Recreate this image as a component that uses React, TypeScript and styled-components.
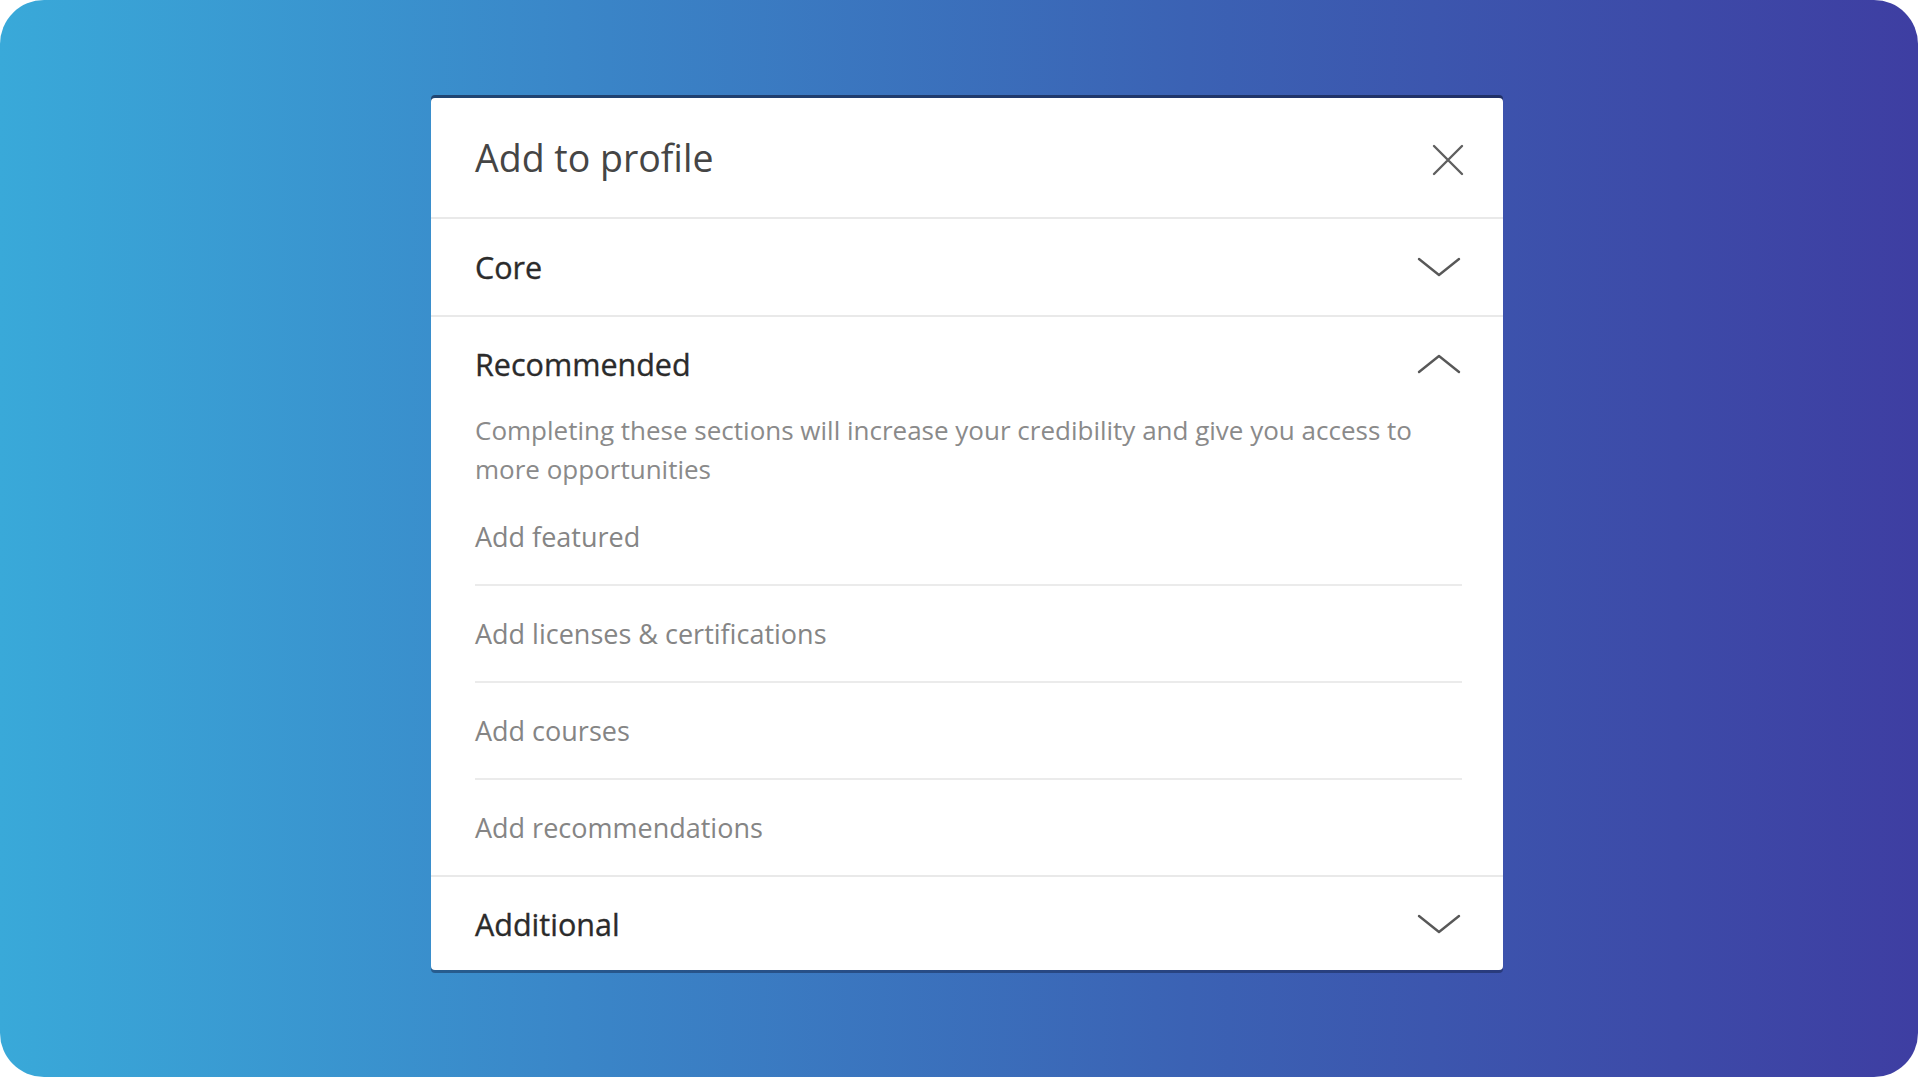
import React from "react";
import styled, { createGlobalStyle } from "styled-components";

const GlobalStyle = createGlobalStyle`
  html, body {
    margin: 0;
    padding: 0;
    background: #ffffff;
    font-family: "Open Sans", "Noto Sans", sans-serif;
  }
`;

const Backdrop = styled.div`
  box-sizing: border-box;
  width: 1918px;
  height: 1077px;
  border-radius: 44px;
  background: linear-gradient(90deg, #39a9d9 0%, #3a86c8 30%, #3b62b4 62%, #3e3ea2 100%);
  display: flex;
  align-items: flex-start;
  padding: 98px 0 0 431px;
`;

const Modal = styled.div`
  width: 1072px;
  background: #ffffff;
  border-radius: 4px;
  box-shadow: 0 -3px 0 rgba(18, 30, 66, 0.65), 0 3px 0 rgba(18, 30, 66, 0.45);
  display: flex;
  flex-direction: column;
`;

const Header = styled.header`
  height: 119px;
  display: flex;
  align-items: center;
  justify-content: space-between;
  padding: 0 39px 0 44px;
  border-bottom: 2px solid #e9e9e9;
`;

const Title = styled.h2`
  margin: 0;
  font-size: 37.5px;
  font-weight: 400;
  color: #454545;
`;

const IconButton = styled.button<{ $offset?: number }>`
  display: flex;
  align-items: center;
  justify-content: center;
  padding: 0;
  margin: ${(p) => p.$offset ?? 0}px 0 0 0;
  border: none;
  background: transparent;
  cursor: pointer;
`;

const Section = styled.section<{ $last?: boolean }>`
  border-bottom: ${(p) => (p.$last ? "none" : "2px solid #e9e9e9")};
`;

const SectionHeader = styled.div<{ $height: number }>`
  height: ${(p) => p.$height}px;
  display: flex;
  align-items: center;
  justify-content: space-between;
  padding: 0 42px 0 44px;
`;

const SectionTitle = styled.h3`
  margin: 0;
  font-size: 30.5px;
  font-weight: 400;
  color: #2b2b2b;
  -webkit-text-stroke: 0.35px #2b2b2b;
`;

const Description = styled.p`
  margin: 0;
  padding: 0 41px 0 44px;
  font-size: 26px;
  line-height: 39px;
  color: #8a8a8a;
`;

const ItemList = styled.ul`
  list-style: none;
  margin: 0 41px 0 44px;
  padding: 0;
`;

const Item = styled.li`
  height: 95px;
  display: flex;
  align-items: center;
  font-size: 27px;
  color: #858585;
  border-bottom: 2px solid #ebebeb;
  cursor: pointer;

  &:last-child {
    border-bottom: none;
  }
`;

const CloseIcon = () => (
  <svg width="32" height="32" viewBox="0 0 32 32" fill="none">
    <path d="M2 2 L30 30 M30 2 L2 30" stroke="#5f5f5f" strokeWidth="2.4" strokeLinecap="round" />
  </svg>
);

const Chevron = ({ up }: { up?: boolean }) => (
  <svg width="44" height="20" viewBox="0 0 44 20" fill="none">
    <polyline
      points={up ? "2,18 22,2 42,18" : "2,2 22,18 42,2"}
      stroke="#585858"
      strokeWidth="2.4"
      strokeLinecap="round"
      strokeLinejoin="round"
    />
  </svg>
);

const recommended = [
  "Add featured",
  "Add licenses & certifications",
  "Add courses",
  "Add recommendations",
];

const App: React.FC = () => {
  return (
    <>
      <GlobalStyle />
      <Backdrop>
        <Modal>
          <Header>
            <Title>Add to profile</Title>
            <IconButton aria-label="Dismiss" $offset={4}>
              <CloseIcon />
            </IconButton>
          </Header>
          <Section>
            <SectionHeader $height={96}>
              <SectionTitle>Core</SectionTitle>
              <IconButton>
                <Chevron />
              </IconButton>
            </SectionHeader>
          </Section>
          <Section>
            <SectionHeader $height={94}>
              <SectionTitle>Recommended</SectionTitle>
              <IconButton>
                <Chevron up />
              </IconButton>
            </SectionHeader>
            <Description>
              Completing these sections will increase your credibility and give you access to more
              opportunities
            </Description>
            <ItemList>
              {recommended.map((label) => (
                <Item key={label}>{label}</Item>
              ))}
            </ItemList>
          </Section>
          <Section $last>
            <SectionHeader $height={93}>
              <SectionTitle>Additional</SectionTitle>
              <IconButton>
                <Chevron />
              </IconButton>
            </SectionHeader>
          </Section>
        </Modal>
      </Backdrop>
    </>
  );
};

export default App;
